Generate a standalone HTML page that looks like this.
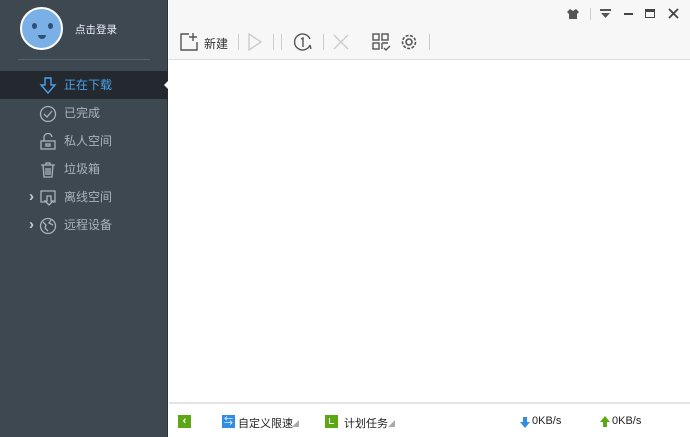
<!DOCTYPE html>
<html><head><meta charset="utf-8"><style>
*{margin:0;padding:0;box-sizing:border-box}
body{width:690px;height:437px;overflow:hidden;font-family:"Liberation Sans","Noto Sans CJK SC",sans-serif;font-size:12px;background:#fff;position:relative}
#side{position:absolute;left:0;top:0;width:168px;height:437px;background:#3d4851;border-right:1px solid #2c343a}
.av{position:absolute;left:20px;top:7px;width:43px;height:43px;border-radius:50%;background:#7ab0e6;border:2px solid #fff}
.av i{position:absolute;width:5px;height:6px;border-radius:50%;background:#2d4f78;top:14px}
.av b{position:absolute;left:16px;top:26px;width:8px;height:4px;border-radius:0 0 4px 4px;background:#2d4f78}
.login{position:absolute;left:75px;top:22px;color:#eef;font-size:10.5px}
.div{position:absolute;left:18px;top:59px;width:132px;height:1px;background:#56616a}
.item{position:absolute;left:0;width:168px;height:28px;color:#aab3ba;font-size:12px;line-height:28px;padding-left:64px}
.item.act{background:#23292e;color:#4aa1ec}
.item svg{position:absolute;left:39px;top:6px}
.arr{position:absolute;left:29px;color:#c6ccd1;font-size:15px;font-weight:bold}
#tb{position:absolute;left:169px;top:0;right:0;height:60px;background:#f7f7f7;border-bottom:1px solid #ddd}
#tb svg{position:absolute}
.sep{position:absolute;width:1px;height:16px;background:#ccc;top:34px}
#ft{position:absolute;left:169px;right:0;top:402px;height:35px;background:#fff;border-top:2px solid #e4e4e4;font-size:11px;color:#222}
#ft .t{position:absolute;top:11px}
.tri{position:absolute;left:164px;top:79px;width:0;height:0;border-top:6px solid transparent;border-bottom:6px solid transparent;border-right:6px solid #fff}
</style></head><body>
<div id="side">
<div class="av"><i style="left:10px"></i><i style="left:26px"></i><b></b></div>
<div class="login">点击登录</div>
<div class="div"></div>
<div class="item act" style="top:71px"><svg width="18" height="18" viewBox="0 0 18 18" fill="none" stroke="#4aa1ec" stroke-width="1.4"><path d="M6 1h6v7h4l-7 8-7-8h4z"/></svg>正在下载</div>
<div class="item" style="top:99px"><svg width="18" height="18" viewBox="0 0 18 18" fill="none" stroke="#aab3ba" stroke-width="1.3"><circle cx="9" cy="9" r="7.5"/><path d="M5 9l3 3 5-6"/></svg>已完成</div>
<div class="item" style="top:127px"><svg width="18" height="18" viewBox="0 0 18 18" fill="none" stroke="#aab3ba" stroke-width="1.3"><rect x="2" y="8" width="14" height="8"/><path d="M5 8V5a4 4 0 0 1 8-1"/><rect x="7" y="11" width="4" height="2"/></svg>私人空间</div>
<div class="item" style="top:155px"><svg width="18" height="18" viewBox="0 0 18 18" fill="none" stroke="#aab3ba" stroke-width="1.3"><path d="M2 4h14M7 4V2h4v2M4 4l1 12h8l1-12M7 7v7M9 7v7M11 7v7"/></svg>垃圾箱</div>
<div class="item" style="top:183px"><span class="arr">›</span><svg width="18" height="18" viewBox="0 0 18 18" fill="none" stroke="#aab3ba" stroke-width="1.3"><path d="M6 13H2V2h14v11h-2M8 7v5H6l4 4 4-4h-2V7z"/></svg>离线空间</div>
<div class="item" style="top:211px"><span class="arr">›</span><svg width="18" height="18" viewBox="0 0 18 18" fill="none" stroke="#aab3ba" stroke-width="1.3"><circle cx="9" cy="9" r="7.5"/><path d="M4 5l3 3-1 3 3 3M12 3l-2 3 4 2"/></svg>远程设备</div>
</div>
<div class="tri"></div>
<div id="tb">
<svg style="left:10px;top:32px" width="20" height="20" viewBox="0 0 20 20" fill="none" stroke="#555" stroke-width="1.4"><path d="M10 2H2v16h16V10M14 1v8M10 5h8"/></svg>
<span style="position:absolute;left:35px;top:35px;font-size:12px;color:#333">新建</span>
<div class="sep" style="left:69px"></div>
<svg style="left:78px;top:33px" width="16" height="18" viewBox="0 0 16 18" fill="none" stroke="#ccc" stroke-width="1.4"><path d="M2 1l12 8-12 8z"/></svg>
<div class="sep" style="left:104px"></div><div class="sep" style="left:112px"></div>
<svg style="left:124px;top:32px" width="20" height="20" viewBox="0 0 20 20" fill="none" stroke="#555" stroke-width="1.4"><path d="M17 13A8 8 0 1 1 17 7M17 13l1 4"/><path d="M8 7l2-1v9"/></svg>
<div class="sep" style="left:154px"></div>
<svg style="left:164px;top:34px" width="20" height="18" viewBox="0 0 20 18" fill="none" stroke="#ccc" stroke-width="1.4"><path d="M1 1l14 14M15 1L1 15"/></svg>
<svg style="left:203px;top:33px" width="20" height="20" viewBox="0 0 20 20" fill="none" stroke="#555" stroke-width="1.4"><rect x="1" y="1" width="6" height="6"/><rect x="10" y="1" width="6" height="6"/><rect x="1" y="10" width="6" height="6"/><path d="M10 10h6M10 10v6M12 15l2 2 4-4"/></svg>
<svg style="left:230px;top:32px" width="20" height="20" viewBox="0 0 20 20" fill="none" stroke="#555" stroke-width="1.6"><circle cx="10" cy="10" r="6.5" stroke-dasharray="3 1.5"/><circle cx="10" cy="10" r="3"/></svg>
<div class="sep" style="left:260px"></div>
<svg style="left:398px;top:9px" width="12" height="10" viewBox="0 0 12 10"><path d="M3 0L0 3l2 2V10h8V5l2-2-3-3-3 2z" fill="#555"/></svg>
<div style="position:absolute;left:421px;top:8px;width:1px;height:12px;background:#ccc"></div>
<svg style="left:431px;top:9px" width="12" height="10"><rect y="0" width="11" height="2" fill="#555"/><path d="M1 4h9L5.5 9z" fill="#555"/></svg>
<div style="position:absolute;left:455px;top:13px;width:9px;height:2px;background:#444"></div>
<div style="position:absolute;left:476px;top:9px;width:10px;height:9px;border:1.5px solid #444;border-top-width:3px"></div>
<svg style="left:499px;top:8px" width="11" height="11" viewBox="0 0 11 11" stroke="#444" stroke-width="1.8"><path d="M1 1l9 9M10 1l-9 9"/></svg>
</div>
<div id="ft">
<div style="position:absolute;left:9px;top:11px;width:13px;height:13px;background:#5ba814;color:#fff;font-size:11px;line-height:13px;text-align:center;font-weight:bold">‹</div>
<div style="position:absolute;left:53px;top:11px;width:13px;height:13px;background:#2f8de4;color:#fff;font-size:9px;line-height:13px;text-align:center">⇆</div>
<span class="t" style="left:69px">自定义限速</span><span class="t" style="left:123px;color:#aaa;font-size:7px;top:15px">◢</span>
<div style="position:absolute;left:156px;top:11px;width:13px;height:13px;background:#5ba814"><div style="position:absolute;left:4px;top:3px;width:5px;height:6px;border-left:1.5px solid #fff;border-bottom:1.5px solid #fff"></div></div>
<span class="t" style="left:175px">计划任务</span><span class="t" style="left:219px;color:#aaa;font-size:7px;top:15px">◢</span>
<svg style="position:absolute;left:351px;top:13px" width="10" height="11"><path d="M3 0h4v5h3L5 11 0 5h3z" fill="#2f8de4"/></svg>
<span class="t" style="left:363px">0KB/s</span>
<svg style="position:absolute;left:431px;top:12px" width="10" height="11"><path d="M3 11h4V6h3L5 0 0 6h3z" fill="#5ba814"/></svg>
<span class="t" style="left:443px">0KB/s</span>
</div>
</body></html>
